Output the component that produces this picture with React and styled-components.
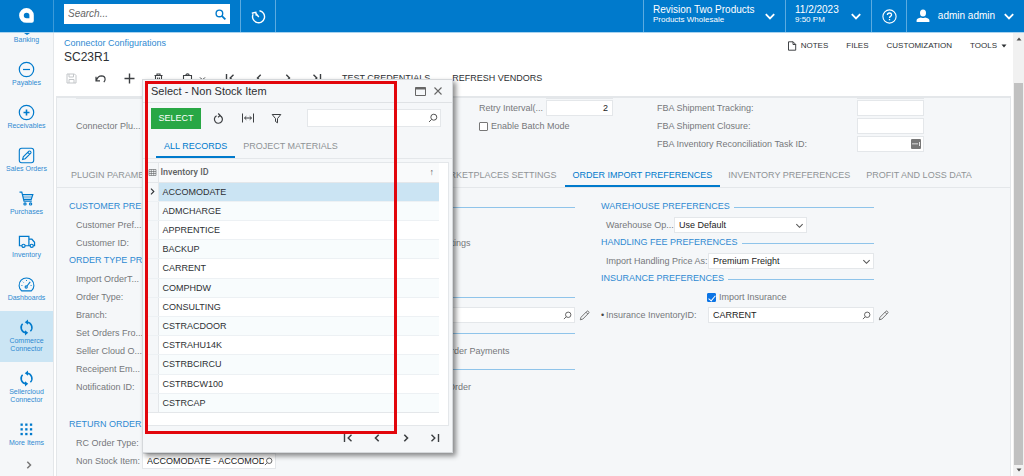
import React from 'react'
import styled, { createGlobalStyle } from 'styled-components'

const GlobalStyle = createGlobalStyle`
*{
box-sizing: border-box;
margin: 0;
padding: 0;
}
:root{
--blue: #007acc;
--link: #2f8ad2;
--panel: #f5f7f9;
--line: #e4e7ea;
--label: #75787b;
--text: #2d3033;
}
body{
font-family: "Liberation Sans", Arial, sans-serif;
font-size: 9px;
line-height: 12px;
color: var(--text);
background: #fff;
}
button, input, select{
font: inherit;
color: inherit;
border: none;
background: none;
border-radius: 0;
outline: none;
}
button{
cursor: pointer;
}
a{
color: inherit;
text-decoration: none;
}
svg{
display: block;
flex: none;
}
`

const Screen = styled.div`
position: relative;
display: flex;
flex-direction: column;
height: 100vh;
overflow: hidden;
`

/* top bar */
const TopBar = styled.header`
display: flex;
flex: none;
height: 33px;
background: var(--blue);
border-bottom: 1px solid #a9d3ef;
color: #fff;
font-size: 10px;
`
const LogoLink = styled.a`
display: flex;
align-items: center;
justify-content: center;
width: 54px;
border-right: 1px solid #3b9ad9;
padding-bottom: 2px;
`
const SearchArea = styled.div`
display: flex;
align-items: flex-start;
padding: 4px 10px;
flex: none;
`
const SearchBox = styled.label`
display: flex;
align-items: center;
width: 166px;
height: 20px;
padding: 0 4px;
background: #fff;
color: var(--blue);
& > input{
flex: 1;
min-width: 0;
color: #555;
}
& > input::placeholder{
color: #666;
font-style: italic;
opacity: 1;
}
`
const TopButton = styled.button`
display: flex;
align-items: center;
justify-content: ${({ $center }) => ($center ? 'center' : 'space-between')};
gap: 4px;
width: ${({ $width }) => $width}px;
padding: 0 ${({ $center }) => ($center ? 0 : 9)}px;
border-left: 1px solid #5cabe0;
text-align: left;
white-space: nowrap;
`
const TopSpace = styled.div`
flex: 1;
border-left: 1px solid #5cabe0;
`
const TwoLines = styled.span`
display: flex;
flex-direction: column;
line-height: 11px;
padding-bottom: 3px;
& > small{
font-size: 8px;
line-height: 10px;
}
`

/* left menu */
const Body = styled.div`
display: flex;
flex: 1;
min-height: 0;
`
const Side = styled.nav`
display: flex;
flex-direction: column;
flex: none;
width: 54px;
background: var(--panel);
border-right: 1px solid var(--line);
overflow: hidden;
`
const SideItem = styled.a`
display: flex;
flex-direction: column;
align-items: center;
gap: 1px;
flex: none;
padding: ${({ $cut }) => ($cut ? 0 : 8)}px 4px 9px;
background: ${({ $active }) => ($active ? '#cbe5f4' : 'transparent')};
color: var(--blue);
font-size: 7px;
line-height: 8px;
text-align: center;
& > span{
color: var(--link);
}
`
const SideMore = styled.button`
display: flex;
justify-content: center;
padding: 4px 0 0 4px;
color: #777;
`

/* page head */
const Main = styled.main`
display: flex;
flex-direction: column;
flex: 1;
min-width: 0;
padding: 0 2px;
`
const PageHead = styled.div`
display: flex;
justify-content: space-between;
flex: none;
height: 33px;
padding: 4px 4px 0 8px;
`
const Crumb = styled.a`
color: var(--link);
`
const Title = styled.h1`
font-size: 12px;
line-height: 16px;
font-weight: 400;
`
const PageLinks = styled.div`
display: flex;
align-items: center;
gap: 18px;
height: 18px;
font-size: 8px;
& > button{
display: flex;
align-items: center;
gap: 4px;
}
`
const ToolBar = styled.div`
display: flex;
flex: none;
height: 30px;
padding: 0 0 6px 1px;
`
const ToolButton = styled.button`
display: flex;
align-items: center;
justify-content: center;
gap: 6px;
width: ${({ $wide }) => ($wide ? 42 : 29)}px;
color: ${({ disabled }) => (disabled ? '#c3c6c9' : '#3c3f42')};
`
const ToolText = styled.button`
padding: 0 11px;
white-space: nowrap;
`

/* form */
const Panel = styled.section`
flex: 1;
min-height: 0;
background: var(--panel);
border: 1px solid var(--line);
border-top-width: 2px;
border-bottom: none;
overflow: hidden;
`
const TopForm = styled.form`
display: grid;
grid-template-columns: 403px 178px 1fr;
padding: 0 0 0 19px;
height: 64px;
`
const Rows = styled.div`
display: flex;
flex-direction: column;
`
const Clipped = styled.div`
width: 67px;
height: 1px;
margin: 0 0 0 ${({ $left }) => $left}px;
background: var(--line);
`
const Row = styled.div`
display: flex;
align-items: center;
flex: none;
height: 18px;
padding-left: ${({ $indent }) => $indent || 0}px;
`
const Label = styled.label`
flex: none;
width: ${({ $width }) => ($width ? $width + 'px' : 'auto')};
color: var(--label);
white-space: nowrap;
`
const Field = styled.span`
display: flex;
align-items: center;
flex: none;
width: ${({ $width }) => $width}px;
height: 16px;
padding: 0 ${({ $right }) => ($right ? 4 : 2)}px 0 4px;
background: #fff;
border: 1px solid var(--line);
color: #555;
& > input, & > select{
flex: 1;
min-width: 0;
width: 100%;
appearance: none;
color: #222;
text-align: ${({ $right }) => ($right ? 'right' : 'left')};
}
`
const Check = styled.input`
appearance: none;
flex: none;
display: grid;
place-items: center;
width: 9px;
height: 9px;
margin-right: 3px;
border: 1px solid #777;
border-radius: 1px;
background: #fff;
&:checked{
background: #0b74e5;
border-color: #0b74e5;
}
&:checked::after{
content: '';
width: 3px;
height: 6px;
border: solid #fff;
border-width: 0 1px 1px 0;
transform: rotate(40deg);
}
`
const EditButton = styled.button`
padding-left: 4px;
color: #666;
`
const Required = styled.span`
width: 5px;
color: #444;
`

/* tabs, both on the page and in the dialog */
const Tabs = styled.div`
display: flex;
flex: none;
height: 26px;
padding-left: ${({ $left }) => $left}px;
border-bottom: 1px solid var(--line);
`
const Tab = styled.button`
flex: none;
height: 100%;
min-width: ${({ $min }) => $min || 0}px;
padding: 2px 8px 0;
border-bottom: 2px solid ${({ $active }) => ($active ? 'var(--blue)' : 'transparent')};
color: ${({ $active }) => ($active ? 'var(--blue)' : '#8f9396')};
text-align: left;
white-space: nowrap;
`
const Columns = styled.form`
display: grid;
grid-template-columns: 240px 240px 300px;
column-gap: 26px;
padding: 10px 0 0 12px;
`
const GroupTitle = styled.h2`
display: flex;
align-items: center;
gap: 4px;
flex: none;
width: ${({ $width }) => $width || 240}px;
height: 18px;
margin-top: ${({ $top }) => $top || 0}px;
color: var(--link);
font-size: 9px;
font-weight: 400;
white-space: nowrap;
& > span{
padding-bottom: 2px;
}
&::after{
content: '';
flex: 1;
height: 1px;
background: #8fc4ea;
}
`

/* page scroll bar */
const ScrollBar = styled.div`
display: flex;
flex-direction: column;
align-items: center;
flex: none;
width: 11px;
padding: 4px 0;
background: #f1f1f1;
color: #505050;
`
const Thumb = styled.div`
flex: 1;
width: 9px;
margin: 42px 0 3px;
background: #c1c1c1;
`

/* dialog */
const Dialog = styled.section`
position: absolute;
left: 142px;
top: 79px;
display: flex;
flex-direction: column;
width: 311px;
background: var(--panel);
border: 1px solid #d5d8db;
box-shadow: 3px 3px 5px rgba(0, 0, 0, .45);
`
const DialogTitle = styled.div`
display: flex;
align-items: center;
gap: 7px;
height: 23px;
padding: 0 9px 0 8px;
border-bottom: 1px solid #dfe2e5;
color: #666;
& > h2{
flex: 1;
font-size: 11px;
font-weight: 400;
color: var(--text);
}
`
const DialogTools = styled.div`
display: flex;
align-items: center;
height: 30px;
padding: 0 11px 0 8px;
`
const SelectButton = styled.button`
width: 50px;
height: 21px;
margin-right: 3px;
background: #28a745;
color: #fff;
`
const DialogSearch = styled(Field)`
flex: 1;
height: 18px;
margin-left: 16px;
`
const Grid = styled.div`
margin: 3px 3px 0 4px;
height: 264px;
background: #fff;
border: 1px solid var(--line);
`
const Table = styled.table`
width: 291px;
height: 250px;
border-collapse: collapse;
table-layout: fixed;
& th, & td{
padding: 0 0 0 4px;
border-bottom: 1px solid #edf1f4;
text-align: left;
font-weight: 400;
}
& th{
height: 19px;
padding-left: 2px;
background: #f9fafb;
border-bottom-color: var(--line);
font-family: Roboto, "Liberation Sans", sans-serif;
font-weight: 500;
color: #5c5f62;
}
& tbody tr:nth-child(even){
background: #f8fcfd;
}
& tbody tr:last-child td{
border-bottom-color: var(--line);
}
& th:first-child, & td:first-child{
width: 10px;
padding: 0;
background: var(--panel);
border-right: 1px solid var(--line);
}
& tbody tr[aria-selected='true']{
background: #cbe4f3;
}
`
const HeadCell = styled.span`
display: flex;
align-items: center;
justify-content: space-between;
padding-right: 5px;
`
const Pager = styled.div`
display: flex;
justify-content: flex-end;
height: 26px;
padding: 0 3px 3px 0;
`

const Marker = styled.div`
position: absolute;
left: 145px;
top: 81px;
width: 252px;
height: 353px;
border: 3px solid #e2060c;
pointer-events: none;
`

const Icon = ({ size = 12, w = 1, box = 24, children, ...rest }) => (
  <svg width={size} height={size} viewBox={`0 0 ${box} ${box}`} fill='none' stroke='currentColor' strokeWidth={w} aria-hidden='true' {...rest}>
    {children}
  </svg>
)

const Lens = ({ size = 9 }) => (
  <Icon size={size} box={10} w={1}>
    <circle cx='5.8' cy='4.2' r='3' />
    <path d='M3.6 6.4 1 9' />
  </Icon>
)
const Chevron = ({ size = 10, w = 1.8, dir = 'down' }) => {
  const d = { down: 'M1.5 3.5 5 7l3.5-3.5', left: 'M6.7 1.8 3.5 5l3.2 3.2', right: 'M3.3 1.8 6.5 5 3.3 8.2' }
  return <Icon size={size} box={10} w={w}><path d={d[dir]} /></Icon>
}
const First = () => <Icon size={10} box={10} w={1.4}><path d='M1.5 1v8M8.500 1.800 5.200 5l3.300 3.200' /></Icon>
const Last = () => <Icon size={10} box={10} w={1.4}><path d='M8.500 1v8M1.500 1.800 4.800 5 1.500 8.200' /></Icon>
const Pencil = () => (
  <Icon size={11} box={11} w={0.9}>
    <path d='M1.3 9.8 2 7.3 8 1.2q.6-.5 1.2 0l.6.6q.5.6 0 1.2L3.8 9.1zM7 2.2 8.8 4' />
  </Icon>
)
const Sync = () => (
  <Icon size={17} box={17} w={1.5}>
    <path d='M9 3.2a5.3 5.3 0 0 1 3.4 9M8 13.8a5.3 5.3 0 0 1-3.4-9' />
    <path d='M10 .6v5.2L6.8 3.2zM7 11.2v5.2l3.2-2.6z' fill='currentColor' stroke='none' />
  </Icon>
)

const menu = [
  {
    name: 'Payables',
    icon: <Icon size={17} box={17} w={1.2}><circle cx='8.5' cy='8.5' r='7.2' /><path d='M5 8.5h7' /></Icon>,
  },
  {
    name: 'Receivables',
    icon: <Icon size={17} box={17} w={1.2}><circle cx='8.5' cy='8.5' r='7.2' /><path d='M5.5 8.5h6M8.5 5.5v6' strokeWidth='1.6' /></Icon>,
  },
  {
    name: 'Sales Orders',
    icon: (
      <Icon size={17} box={17} w={1.1}>
        <rect x='1.3' y='1.3' width='14.4' height='14.4' rx='2.4' />
        <path d='m4.6 12.4.7-2.6 5.6-5.6q.6-.5 1.2 0l.7.7q.5.6 0 1.2l-5.6 5.6zM9.8 5.3l1.9 1.9' />
      </Icon>
    ),
  },
  {
    name: 'Purchases',
    icon: (
      <Icon size={17} box={17} w={1.2}>
        <path d='M1.5 2.2h2.3l2.2 9h7.800M4.4 4.6h10.4l-1.6 4.800H5.6' />
        <path d='M5 7h8.800' strokeWidth='.8' />
        <circle cx='7' cy='13.9' r='1.1' /><circle cx='12.6' cy='13.9' r='1.1' />
      </Icon>
    ),
  },
  {
    name: 'Inventory',
    icon: (
      <Icon size={18} height={17} box={18} w={1.3}>
        <path d='M3.600 13.500H1V3.500h10v10H7M11 6.600h3.200L17 9.800v3.700h-1.300M11 13.500h1.400' />
        <circle cx='5.3' cy='13.600' r='1.700' /><circle cx='14' cy='13.600' r='1.700' />
      </Icon>
    ),
  },
  {
    name: 'Dashboards',
    icon: (
      <Icon size={17} box={17} w={1.1}>
        <path d='M3.600 14.900a7.400 7.400 0 1 1 9.800 0z' />
        <circle cx='8.200' cy='11' r='1.100' />
        <path d='m9 10 3.200-4.200' />
        <path d='M3.400 9.500h1M4.900 5.800l.7.7M8.500 4v1M12.600 9.500h1' strokeWidth='.9' />
      </Icon>
    ),
  },
  { name: 'Commerce Connector', icon: <Sync />, active: true },
  { name: 'Sellercloud Connector', icon: <Sync /> },
  {
    name: 'More Items',
    icon: (
      <Icon size={17} box={17} stroke='none' fill='currentColor'>
        {[2.5, 7.2, 11.9].map((y) => [2.5, 7.2, 11.9].map((x) => <rect key={x + '-' + y} x={x} y={y} width='2.3' height='2.3' />))}
      </Icon>
    ),
  },
]

const items = [
  'ACCOMODATE', 'ADMCHARGE', 'APPRENTICE', 'BACKUP', 'CARRENT', 'COMPHDW',
  'CONSULTING', 'CSTRACDOOR', 'CSTRAHU14K', 'CSTRBCIRCU', 'CSTRBCW100', 'CSTRCAP',
]

const Header = () => (
  <TopBar>
    <LogoLink href='#' aria-label='Home'>
      <svg width='15' height='15' viewBox='0 0 15 15'>
        <path fill='#fff' fillRule='evenodd' d='M7.5 0a7.300 7.300 0 0 1 7.300 7.300v5.500q0 2-2 2H7.500a7.400 7.400 0 0 1 0-14.800zM7.600 4.700a2.800 2.800 0 1 0 0 5.600h2.800V7.500a2.800 2.800 0 0 0-2.800-2.800z' />
      </svg>
    </LogoLink>
    <SearchArea>
      <SearchBox>
        <input type='text' placeholder='Search...' aria-label='Search' />
        <Icon size={11} box={11} w={1.4}><circle cx='4.4' cy='4.4' r='3.3' /><path d='m6.8 6.8 3.6 3.6' strokeWidth='1.8' /></Icon>
      </SearchBox>
    </SearchArea>
    <TopButton $width={35} $center aria-label='Business date'>
      <Icon size={15} box={15} w={1.4}>
        <path d='M8.500 1.800a6 6 0 1 1-6.400 3.400M.8 4.200l4-.9.5 3.400M4.800 4.200 7.800 8' />
      </Icon>
    </TopButton>
    <TopSpace />
    <TopButton $width={142}>
      <TwoLines>Revision Two Products<small>Products Wholesale</small></TwoLines>
      <Chevron size={12} w={1.5} />
    </TopButton>
    <TopButton $width={86}>
      <TwoLines>11/2/2023<small>9:50 PM</small></TwoLines>
      <Chevron size={12} w={1.5} />
    </TopButton>
    <TopButton $width={35} $center aria-label='Help'>
      <Icon size={15} box={15} w={1.1}>
        <circle cx='7.5' cy='7.5' r='6.6' />
        <path d='M5.4 6q.1-2 2.1-2t2.1 1.8q0 1-1.1 1.6-1 .6-1 1.6M7.5 10v1.3' strokeWidth='1.3' />
      </Icon>
    </TopButton>
    <TopButton $width={118}>
      <svg width='14' height='14' viewBox='0 0 14 14' fill='#fff' aria-hidden='true'>
        <ellipse cx='7' cy='4' rx='3' ry='3.6' />
        <path d='M.6 13V11q.4-1.8 4.4-2.6 2 1 4 0 4 .8 4.4 2.6v2z' />
      </svg>
      admin admin
      <Chevron size={12} w={1.5} />
    </TopButton>
  </TopBar>
)

const SideMenu = () => (
  <Side>
    <SideItem href='#' $cut>
      <svg width='6' height='2' viewBox='0 0 6 2' fill='currentColor'><path d='M0 0h6L3 2z' /></svg>
      <span>Banking</span>
    </SideItem>
    {menu.map((item) => (
      <SideItem key={item.name} href='#' $active={item.active}>
        {item.icon}
        <span>{item.name}</span>
      </SideItem>
    ))}
    <SideMore aria-label='Expand menu'><Chevron dir='right' w={1.5} /></SideMore>
  </Side>
)

const PageTop = () => (
  <>
    <PageHead>
      <div>
        <Crumb href='#'>Connector Configurations</Crumb>
        <Title>SC23R1</Title>
      </div>
      <PageLinks>
        <button>
          <Icon size={10} box={10} w={0.9}><path d='M1.5.8h4.6l2.6 2.6v5.8H1.5zM6 .8v2.7h2.7' /></Icon>
          NOTES
        </button>
        <button>FILES</button>
        <button>CUSTOMIZATION</button>
        <button>
          TOOLS
          <svg width='6' height='4' viewBox='0 0 6 4' fill='currentColor'><path d='M.5.5h5L3 3.5z' /></svg>
        </button>
      </PageLinks>
    </PageHead>
    <ToolBar>
      <ToolButton disabled aria-label='Save'>
        <Icon size={11} box={11}><path d='M1 1h7.5L10 2.5V10H1zM3 1v3h4.5V1M3 10V6.5h5V10' /></Icon>
      </ToolButton>
      <ToolButton aria-label='Undo'>
        <Icon size={11} box={11} w={1.2}><path d='M1 3.800v4h4M1.300 7.500q1.600-4.700 5.200-4.700 3.600.2 3.600 3.400 0 1.600-1.300 2.900' /></Icon>
      </ToolButton>
      <ToolButton aria-label='Add'>
        <Icon size={11} box={11} w={1.4}><path d='M5.5 .5v10M.5 5.5h10' /></Icon>
      </ToolButton>
      <ToolButton aria-label='Delete'>
        <Icon size={11} box={11} w={1.1}><path d='M1.5 2.5h8M4 2.3V1h3v1.300M2.500 3v7h6V3M4.600 4.500v4M6.400 4.500v4' /></Icon>
      </ToolButton>
      <ToolButton $wide aria-label='Clipboard'>
        <Icon size={11} box={11} w={1.1}><path d='M1.5 2.5h8V10h-8zM3.800 2.500q0-1.600 1.700-1.600t1.700 1.600' /></Icon>
        <Chevron size={7} w={1.4} />
      </ToolButton>
      <ToolButton aria-label='First'><First /></ToolButton>
      <ToolButton aria-label='Previous'><Chevron dir='left' w={1.4} /></ToolButton>
      <ToolButton aria-label='Next'><Chevron dir='right' w={1.4} /></ToolButton>
      <ToolButton aria-label='Last'><Last /></ToolButton>
      <ToolText>TEST CREDENTIALS</ToolText>
      <ToolText>REFRESH VENDORS</ToolText>
    </ToolBar>
  </>
)

const Heading = ({ children, ...rest }) => (
  <GroupTitle {...rest}>{children && <span>{children}</span>}</GroupTitle>
)

const GeneralForm = () => (
  <TopForm>
    <Rows>
      <Clipped />
      <Row />
      <Row><Label>Connector Plu...</Label></Row>
    </Rows>
    <Rows>
      <Clipped $left={67} />
      <Row>
        <Label $width={67} htmlFor='retry'>Retry Interval(...</Label>
        <Field $width={67} $right><input id='retry' defaultValue='2' /></Field>
      </Row>
      <Row>
        <Check type='checkbox' id='batch' />
        <Label htmlFor='batch'>Enable Batch Mode</Label>
      </Row>
    </Rows>
    <Rows>
      <Clipped $left={200} />
      <Row>
        <Label $width={200} htmlFor='tracking'>FBA Shipment Tracking:</Label>
        <Field $width={67}><input id='tracking' /></Field>
      </Row>
      <Row>
        <Label $width={200} htmlFor='closure'>FBA Shipment Closure:</Label>
        <Field $width={67}><input id='closure' /></Field>
      </Row>
      <Row>
        <Label $width={200} htmlFor='task'>FBA Inventory Reconciliation Task ID:</Label>
        <Field $width={67}>
          <input id='task' />
          <svg width='10' height='10' viewBox='0 0 10 10'>
            <rect width='10' height='10' rx='1' fill='#777' />
            <path d='M1.5 4h1v1.6h-1zM3.5 4h1v1.6h-1zM5.5 4h1v1.6h-1zM8 3h.8v4H8z' fill='#fff' />
          </svg>
        </Field>
      </Row>
    </Rows>
  </TopForm>
)

const Preferences = () => (
  <Columns>
    <Rows>
      <Heading>CUSTOMER PREF</Heading>
      <Row $indent={7}><Label>Customer Pref...</Label></Row>
      <Row $indent={7}><Label>Customer ID:</Label></Row>
      <Heading>ORDER TYPE PRE</Heading>
      <Row $indent={7}><Label>Import OrderT...</Label></Row>
      <Row $indent={7}><Label>Order Type:</Label></Row>
      <Row $indent={7}><Label>Branch:</Label></Row>
      <Row $indent={7}><Label>Set Orders Fro...</Label></Row>
      <Row $indent={7}><Label>Seller Cloud O...</Label></Row>
      <Row $indent={7}><Label>Receipent Em...</Label></Row>
      <Row $indent={7}><Label>Notification ID:</Label></Row>
      <Heading $top={20}>RETURN ORDER</Heading>
      <Row $indent={7}><Label>RC Order Type:</Label></Row>
      <Row $indent={7}>
        <Label $width={66} htmlFor='nonstock'>Non Stock Item:</Label>
        <Field $width={134}><input id='nonstock' defaultValue='ACCOMODATE - ACCOMOD' /><Lens /></Field>
      </Row>
    </Rows>
    <Rows>
      <Heading />
      <Row />
      <Row $indent={103}><Label>Settings</Label></Row>
      <Row />
      <Row />
      <Heading />
      <Row>
        <Field $width={240}><input aria-label='Item' /><Lens /></Field>
        <EditButton type='button' aria-label='Edit item'><Pencil /></EditButton>
      </Row>
      <Heading />
      <Row $indent={109}><Label>Order Payments</Label></Row>
      <Heading />
      <Row $indent={113}><Label>Order</Label></Row>
    </Rows>
    <Rows>
      <Heading $width={273}>WAREHOUSE PREFERENCES</Heading>
      <Row $indent={5}>
        <Label $width={68} htmlFor='warehouse'>Warehouse Op...</Label>
        <Field $width={133}>
          <select id='warehouse'><option>Use Default</option></select>
          <Chevron size={9} w={1.2} />
        </Field>
      </Row>
      <Heading $width={273}>HANDLING FEE PREFERENCES</Heading>
      <Row $indent={5}>
        <Label $width={102} htmlFor='handling'>Import Handling Price As:</Label>
        <Field $width={166}>
          <select id='handling'><option>Premium Freight</option></select>
          <Chevron size={9} w={1.2} />
        </Field>
      </Row>
      <Heading $width={273}>INSURANCE PREFERENCES</Heading>
      <Row $indent={106}>
        <Check type='checkbox' id='insurance' defaultChecked />
        <Label htmlFor='insurance'>Import Insurance</Label>
      </Row>
      <Row>
        <Required>•</Required>
        <Label $width={102} htmlFor='inventory'>Insurance InventoryID:</Label>
        <Field $width={166}><input id='inventory' defaultValue='CARRENT' /><Lens /></Field>
        <EditButton type='button' aria-label='Edit inventory'><Pencil /></EditButton>
      </Row>
    </Rows>
  </Columns>
)

const SelectDialog = () => (
  <Dialog role='dialog' aria-labelledby='dialog-title'>
    <DialogTitle>
      <h2 id='dialog-title'>Select - Non Stock Item</h2>
      <button aria-label='Maximize'>
        <Icon size={11} box={11}><path d='M.5 1.5h10v8H.5z' /><path d='M.5 2.5h10' strokeWidth='2' /></Icon>
      </button>
      <button aria-label='Close'>
        <Icon size={10} box={10} w={1.1}><path d='m1.500 1.500 7 7M8.500 1.500l-7 7' /></Icon>
      </button>
    </DialogTitle>
    <DialogTools>
      <SelectButton>SELECT</SelectButton>
      <ToolButton aria-label='Refresh'>
        <Icon size={11} box={11} w={1.2}><path d='M7 2.600a4 4 0 1 1-3.400.1M5.200.5l2 2-2.200 1.700' /></Icon>
      </ToolButton>
      <ToolButton aria-label='Fit to screen'>
        <Icon size={12} box={12} w={1}><path d='M.5 1.500v9M11.500 1.500v9M2.500 6h7M4.300 4.300 2.500 6l1.800 1.700M7.700 4.300 9.500 6 7.700 7.700' /></Icon>
      </ToolButton>
      <ToolButton aria-label='Filter'>
        <Icon size={11} box={11} w={1}><path d='M1.200 1.500h8.600L6.500 5.600v4.200L4.500 8.500V5.600z' /></Icon>
      </ToolButton>
      <DialogSearch><input aria-label='Search records' /><Lens size={10} /></DialogSearch>
    </DialogTools>
    <Tabs $left={13}>
      <Tab $active>ALL RECORDS</Tab>
      <Tab>PROJECT MATERIALS</Tab>
    </Tabs>
    <Grid>
      <Table>
        <thead>
          <tr>
            <th>
              <Icon size={9} box={9} w={0.6}><path d='M1 1.500h7v6H1zM1 3.500h7M1 5.500h7M3.300 1.500v6M5.700 1.500v6' /></Icon>
            </th>
            <th><HeadCell>Inventory ID <span>↑</span></HeadCell></th>
          </tr>
        </thead>
        <tbody>
          {items.map((item, i) => (
            <tr key={item} aria-selected={i === 0}>
              <td>{i === 0 && <Chevron dir='right' size={9} w={1.2} />}</td>
              <td>{item}</td>
            </tr>
          ))}
        </tbody>
      </Table>
    </Grid>
    <Pager>
      <ToolButton aria-label='First page'><First /></ToolButton>
      <ToolButton aria-label='Previous page'><Chevron dir='left' w={1.6} /></ToolButton>
      <ToolButton aria-label='Next page'><Chevron dir='right' w={1.6} /></ToolButton>
      <ToolButton aria-label='Last page'><Last /></ToolButton>
    </Pager>
  </Dialog>
)

const App = () => {
  return (
    <Screen>
      <GlobalStyle />
      <Header />
      <Body>
        <SideMenu />
        <Main>
          <PageTop />
          <Panel>
            <GeneralForm />
            <Tabs $left={6}>
              <Tab $min={365}>PLUGIN PARAME</Tab>
              <Tab>MARKETPLACES SETTINGS</Tab>
              <Tab $active>ORDER IMPORT PREFERENCES</Tab>
              <Tab>INVENTORY PREFERENCES</Tab>
              <Tab>PROFIT AND LOSS DATA</Tab>
            </Tabs>
            <Preferences />
          </Panel>
        </Main>
        <ScrollBar>
          <svg width='6' height='4' viewBox='0 0 6 4' fill='currentColor'><path d='M.5 3.5h5L3 .5z' /></svg>
          <Thumb />
          <svg width='6' height='4' viewBox='0 0 6 4' fill='currentColor'><path d='M.5.5h5L3 3.5z' /></svg>
        </ScrollBar>
      </Body>
      <SelectDialog />
      <Marker />
    </Screen>
  )
}

export default App
